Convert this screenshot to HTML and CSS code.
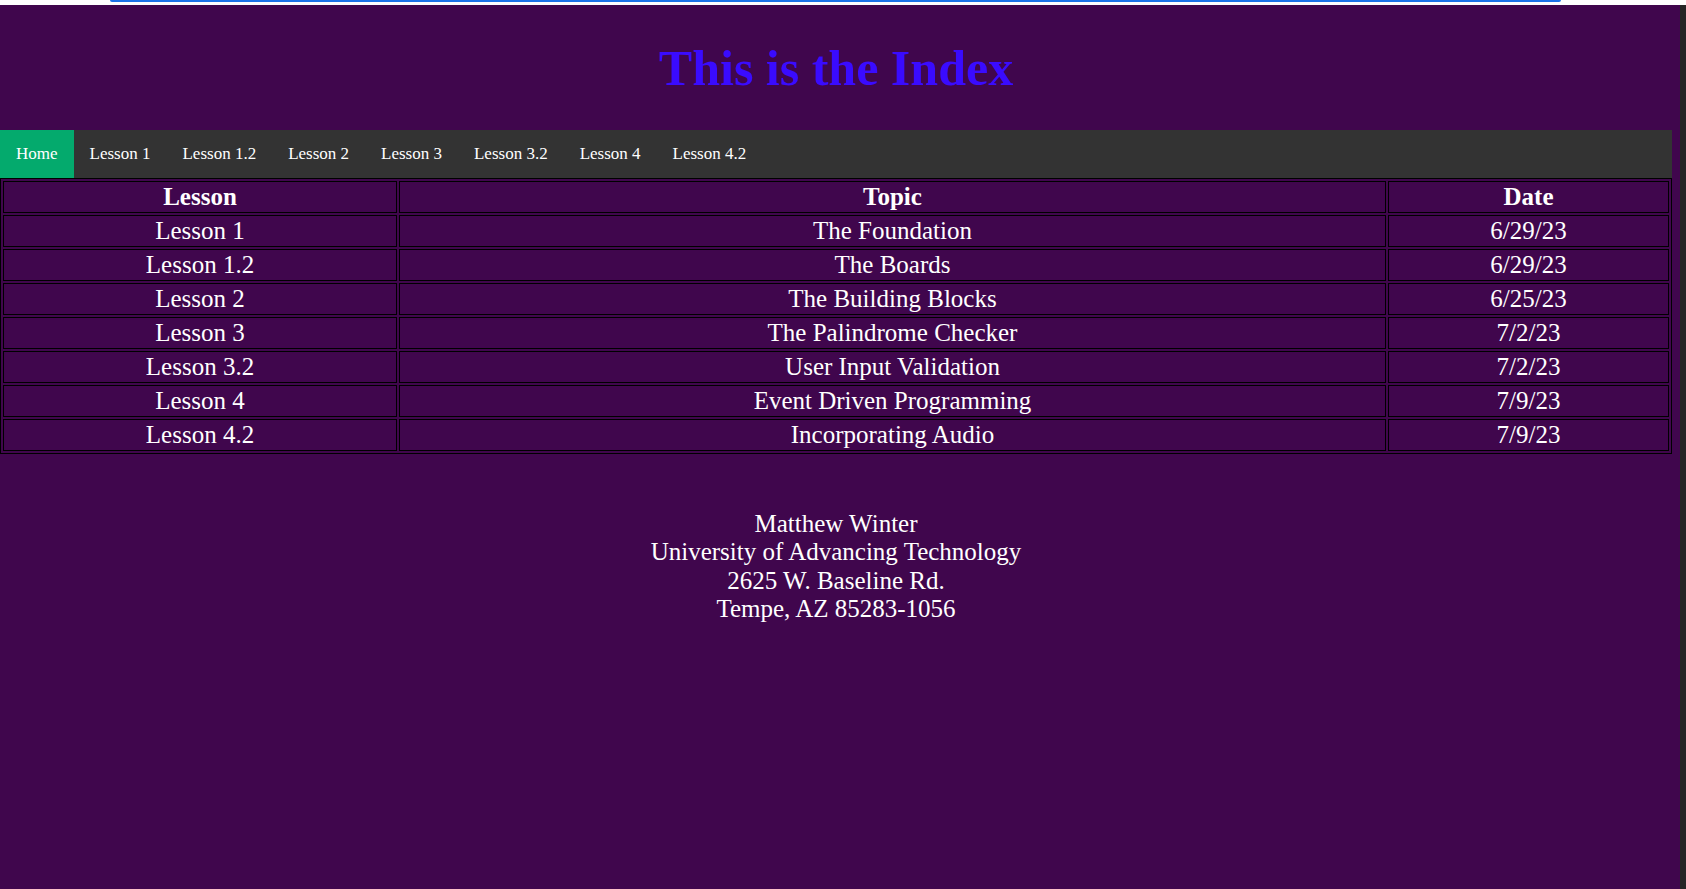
FILE: index.html
```html
<!DOCTYPE html>
<html lang="en">
<head>
<meta charset="utf-8">
<title>Index</title>
<link rel="stylesheet" href="styles.css">
</head>
<body>
<div class="chrome-top"><div class="chrome-line"></div></div>
<div class="frame">
  <div class="page">
    <header class="masthead">
      <h1 class="title">This is the Index</h1>
    </header>
    <nav class="nav">
      <a class="nav-link active" href="#">Home</a>
      <a class="nav-link" href="#">Lesson 1</a>
      <a class="nav-link" href="#">Lesson 1.2</a>
      <a class="nav-link" href="#">Lesson 2</a>
      <a class="nav-link" href="#">Lesson 3</a>
      <a class="nav-link" href="#">Lesson 3.2</a>
      <a class="nav-link" href="#">Lesson 4</a>
      <a class="nav-link" href="#">Lesson 4.2</a>
    </nav>
    <table class="lessons">
      <thead>
        <tr><th class="c-lesson">Lesson</th><th class="c-topic">Topic</th><th class="c-date">Date</th></tr>
      </thead>
      <tbody>
        <tr><td>Lesson 1</td><td>The Foundation</td><td>6/29/23</td></tr>
        <tr><td>Lesson 1.2</td><td>The Boards</td><td>6/29/23</td></tr>
        <tr><td>Lesson 2</td><td>The Building Blocks</td><td>6/25/23</td></tr>
        <tr><td>Lesson 3</td><td>The Palindrome Checker</td><td>7/2/23</td></tr>
        <tr><td>Lesson 3.2</td><td>User Input Validation</td><td>7/2/23</td></tr>
        <tr><td>Lesson 4</td><td>Event Driven Programming</td><td>7/9/23</td></tr>
        <tr><td>Lesson 4.2</td><td>Incorporating Audio</td><td>7/9/23</td></tr>
      </tbody>
    </table>
    <footer class="contact">
      <div>Matthew Winter</div>
      <div>University of Advancing Technology</div>
      <div>2625 W. Baseline Rd.</div>
      <div>Tempe, AZ 85283-1056</div>
    </footer>
  </div>
  <div class="side-strip"></div>
</div>
</body>
</html>
```

FILE: styles.css
```css
html, body {
  margin: 0;
  padding: 0;
  height: 100%;
}

body {
  background: #40064d;
  font-family: "Liberation Serif", "Times New Roman", serif;
  color: #ffffff;
  display: flex;
  flex-direction: column;
  overflow: hidden;
}

.chrome-top {
  height: 5px;
  background: #ffffff;
  padding: 0 125px 0 110px;
  flex: none;
}

.chrome-line {
  height: 2px;
  background: #1a73e8;
  border-radius: 0 0 2px 2px;
}

.frame {
  flex: 1;
  display: flex;
}

.page {
  width: 1672px;
  padding-right: 8px;
  flex: none;
}

.side-strip {
  flex: 1;
  background: #262626;
}

.masthead {
  padding: 33px 0 31px;
}

.title {
  margin: 0;
  text-align: center;
  font-size: 50px;
  line-height: 61px;
  font-weight: bold;
  color: #3a0bff;
}

.nav {
  display: flex;
  background: #333333;
}

.nav-link {
  display: block;
  padding: 14px 16px;
  font-size: 17px;
  color: #ffffff;
  text-decoration: none;
}

.nav-link.active {
  background: #04aa6d;
}

.lessons {
  width: 1672px;
  table-layout: fixed;
  border: 1px solid #000000;
  border-spacing: 2px;
  font-size: 25px;
  line-height: 28px;
}

.lessons th,
.lessons td {
  border: 1px solid #000000;
  padding: 1px;
  text-align: center;
  box-sizing: border-box;
}

.c-lesson { width: 394px; }
.c-topic { width: 987px; }
.c-date { width: 281px; }

.contact {
  margin-top: 56px;
  text-align: center;
  font-size: 25px;
  line-height: 28.3px;
}
```
